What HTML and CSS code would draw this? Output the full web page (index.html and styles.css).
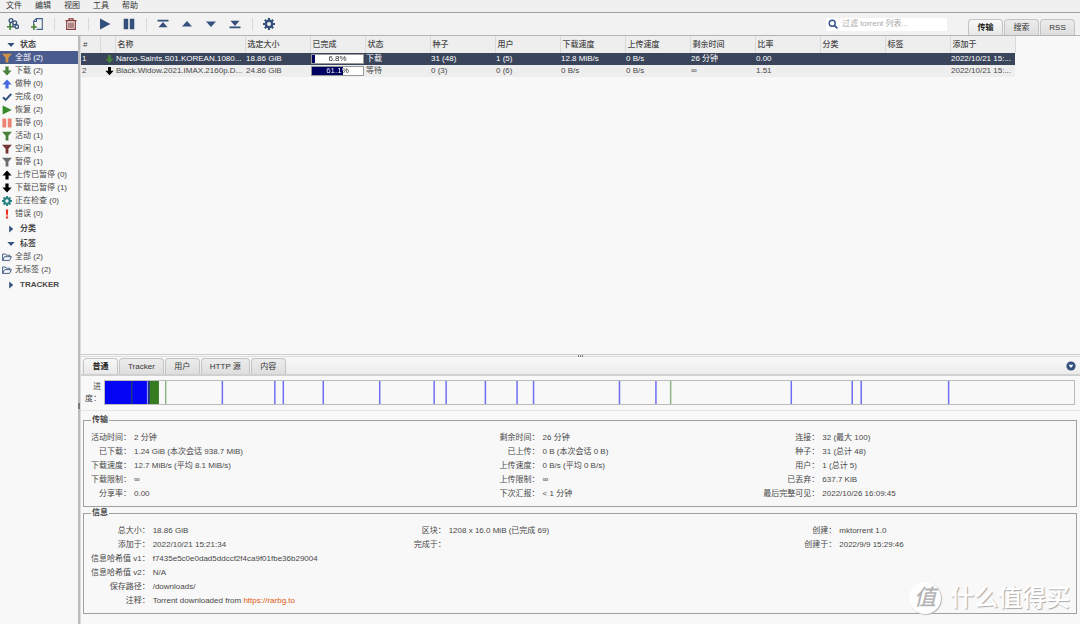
FILE: index.html
```html
<!DOCTYPE html>
<html lang="zh-CN">
<head>
<meta charset="utf-8">
<title>Torrent</title>
<link rel="stylesheet" href="styles.css">
</head>
<body>
<svg class="defs" aria-hidden="true">
  <symbol id="funnel" viewBox="0 0 10 10"><path d="M0 .7h10L6.400 4.800V9.500H3.600V4.800z" fill="currentColor"/></symbol>
  <symbol id="down" viewBox="0 0 10 10"><path d="M3.400.5h3.200v4.100h3L5 9.600.4 4.600h3z" fill="currentColor"/></symbol>
  <symbol id="up" viewBox="0 0 10 10"><path d="M3.400 9.500h3.200V5.400h3L5 .4.4 5.400h3z" fill="currentColor"/></symbol>
  <symbol id="check" viewBox="0 0 10 10"><path d="M1 5.200l2.700 2.700L9.200 2" fill="none" stroke="currentColor" stroke-width="2"/></symbol>
  <symbol id="play" viewBox="0 0 10 10"><path d="M.6.4L9.800 5 .6 9.600z" fill="currentColor"/></symbol>
  <symbol id="pause" viewBox="0 0 10 10"><path d="M.4.5h3.800v9H.4zM5.800.5h3.800v9H5.800z" fill="currentColor"/></symbol>
  <symbol id="gear" viewBox="0 0 12 12"><circle cx="6" cy="6" r="3.200" fill="none" stroke="currentColor" stroke-width="2.400"/><path d="M6 0v2.500M6 9.500V12M0 6h2.500M9.500 6H12M1.800 1.800l1.700 1.700M8.500 8.500l1.700 1.700M10.200 1.800L8.500 3.500M3.500 8.500L1.800 10.200" stroke="currentColor" stroke-width="2.200"/></symbol>
  <symbol id="bang" viewBox="0 0 10 10"><path d="M3.800.4h2.400l-.4 6H4.200zM3.900 7.500h2.200v2H3.900z" fill="currentColor"/></symbol>
  <symbol id="folder" viewBox="0 0 10 10"><path d="M.6 8.400V2h2.700l1 1.200h3.500v1.500M.6 8.400h6.900l2-3.700H2.500z" fill="none" stroke="currentColor" stroke-width=".9" stroke-linejoin="round"/></symbol>
  <symbol id="open" viewBox="0 0 8 8"><path d="M.4 2h7.200L4 6z" fill="currentColor"/></symbol>
  <symbol id="closed" viewBox="0 0 8 8"><path d="M2.200.4v7.200L6.200 4z" fill="currentColor"/></symbol>
</svg>

<nav class="menubar">
  <button>文件</button><button>编辑</button><button>视图</button><button>工具</button><button>帮助</button>
</nav>

<header class="toolbar">
  <div class="tools">
    <button aria-label="添加链接"><svg viewBox="0 0 12 12"><g fill="none" stroke="#34507c" stroke-width="1.300"><circle cx="4" cy="2.600" r="1.900"/><circle cx="7.700" cy="4.700" r="1.900"/><circle cx="9.800" cy="8.700" r="1.800"/><path d="M3.500 4.500L3 7M9.500 5.800l.4 1.200M6.200 6l-.5 2.600 2.500.2"/></g><path d="M0 8.700h6.200M3.100 5.700v6.200" stroke="#47803a" stroke-width="1.600"/></svg></button>
    <button aria-label="添加文件"><svg viewBox="0 0 12 12"><path d="M2.600 7V3.200L5.300.6h6v10.800H5.500M5.500.8v2.700H2.800" fill="none" stroke="#42618c" stroke-width="1.100"/><path d="M0 9h5.800M2.900 6v6" stroke="#47803a" stroke-width="1.600"/></svg></button>
    <span class="sep"></span>
    <button aria-label="删除"><svg viewBox="0 0 12 12"><path d="M.5 2.700h11M4 2.500V.8h4v1.700" fill="none" stroke="#873b3b" stroke-width="1.300"/><path d="M1.700 3v8.300h8.600V3M4 4.500V10M6 4.500V10M8 4.500V10" fill="none" stroke="#873b3b" stroke-width="1.200"/></svg></button>
    <span class="sep"></span>
    <button aria-label="开始"><svg viewBox="0 0 12 12"><path d="M1 .5L11.500 6 1 11.500z" fill="#34507c"/></svg></button>
    <button aria-label="暂停"><svg viewBox="0 0 12 12"><path d="M.7.8h4.500v10.400H.7zM6.800.8h4.500v10.400H6.800z" fill="#34507c"/></svg></button>
    <span class="sep"></span>
    <button aria-label="置顶"><svg viewBox="0 0 12 12"><path d="M.5 1.800h11v1.700H.5zM6 4l4.500 5.200h-9z" fill="#34507c"/></svg></button>
    <button aria-label="上移"><svg viewBox="0 0 12 12"><path d="M6 3l5 5.500H1z" fill="#34507c"/></svg></button>
    <button aria-label="下移"><svg viewBox="0 0 12 12"><path d="M6 9l5-5.500H1z" fill="#34507c"/></svg></button>
    <button aria-label="置底"><svg viewBox="0 0 12 12"><path d="M.5 8.500h11v1.700H.5zM6 8L1.500 2.800h9z" fill="#34507c"/></svg></button>
    <span class="sep"></span>
    <button aria-label="设置"><svg class="navy"><use href="#gear"/></svg></button>
  </div>
  <label class="search">
    <svg viewBox="0 0 10 10"><circle cx="4.200" cy="4.200" r="3" fill="none" stroke="#2f4f8c" stroke-width="1.400"/><path d="M6.400 6.400l3 3" stroke="#2f4f8c" stroke-width="1.600"/></svg>
    <input type="text" placeholder="过滤 torrent 列表..." aria-label="过滤 torrent 列表">
  </label>
  <div class="tabs main-tabs">
    <button class="tab active">传输</button><button class="tab">搜索</button><button class="tab">RSS</button>
  </div>
</header>

<main class="workspace">
  <aside class="sidebar">
    <button class="group"><svg><use href="#open"/></svg>状态</button>
    <button class="item selected"><svg class="orange"><use href="#funnel"/></svg>全部 (2)</button>
    <button class="item"><svg class="green"><use href="#down"/></svg>下载 (2)</button>
    <button class="item"><svg class="blue"><use href="#up"/></svg>做种 (0)</button>
    <button class="item"><svg class="navy"><use href="#check"/></svg>完成 (0)</button>
    <button class="item"><svg class="bright"><use href="#play"/></svg>恢复 (2)</button>
    <button class="item"><svg class="salmon"><use href="#pause"/></svg>暂停 (0)</button>
    <button class="item"><svg class="green"><use href="#funnel"/></svg>活动 (1)</button>
    <button class="item"><svg class="maroon"><use href="#funnel"/></svg>空闲 (1)</button>
    <button class="item"><svg class="gray"><use href="#funnel"/></svg>暂停 (1)</button>
    <button class="item"><svg class="black"><use href="#up"/></svg>上传已暂停 (0)</button>
    <button class="item"><svg class="black"><use href="#down"/></svg>下载已暂停 (1)</button>
    <button class="item"><svg class="teal"><use href="#gear"/></svg>正在检查 (0)</button>
    <button class="item"><svg class="red"><use href="#bang"/></svg>错误 (0)</button>
    <button class="group"><svg><use href="#closed"/></svg>分类</button>
    <button class="group"><svg><use href="#open"/></svg>标签</button>
    <button class="item"><svg class="navy"><use href="#folder"/></svg>全部 (2)</button>
    <button class="item"><svg class="navy"><use href="#folder"/></svg>无标签 (2)</button>
    <button class="group"><svg><use href="#closed"/></svg>TRACKER</button>
  </aside>
  <div class="vsplit"><i></i></div>
  <div class="content">
    <section class="list">
      <table>
        <colgroup><col class="c-num"><col class="c-icon"><col class="c-name"><col><col class="c-done"><col><col><col><col><col><col><col><col><col><col></colgroup>
        <thead><tr><th>#</th><th></th><th>名称</th><th>选定大小</th><th>已完成</th><th>状态</th><th>种子</th><th>用户</th><th>下载速度</th><th>上传速度</th><th>剩余时间</th><th>比率</th><th>分类</th><th>标签</th><th>添加于</th></tr></thead>
        <tbody>
          <tr class="current"><td>1</td><td><svg class="green"><use href="#down"/></svg></td><td>Narco-Saints.S01.KOREAN.1080...</td><td>18.86 GiB</td><td><div class="meter" style="--p:6.8%"><span>6.8%</span></div></td><td>下载</td><td>31 (48)</td><td>1 (5)</td><td>12.8 MiB/s</td><td>0 B/s</td><td>26 分钟</td><td>0.00</td><td></td><td></td><td>2022/10/21 15:...</td></tr>
          <tr><td>2</td><td><svg class="black"><use href="#down"/></svg></td><td>Black.Widow.2021.IMAX.2160p.D...</td><td>24.86 GiB</td><td><div class="meter" style="--p:61.1%"><span>61.1%</span></div></td><td>等待</td><td>0 (3)</td><td>0 (6)</td><td>0 B/s</td><td>0 B/s</td><td>∞</td><td>1.51</td><td></td><td></td><td>2022/10/21 15:...</td></tr>
        </tbody>
      </table>
    </section>
    <div class="hsplit"><i></i><i></i><i></i></div>
    <div class="detail-bar">
      <div class="tabs">
        <button class="tab active">普通</button><button class="tab">Tracker</button><button class="tab">用户</button><button class="tab">HTTP 源</button><button class="tab">内容</button>
      </div>
      <button class="collapse" aria-label="收起"><svg viewBox="0 0 10 10"><circle cx="5" cy="5" r="4.600" fill="#34507c"/><path d="M2.600 3.700h4.800L5 6.900z" fill="#fff"/></svg></button>
    </div>
    <section class="details">
      <div class="pieces">
        <span>进度：</span>
        <svg viewBox="0 0 970 24" preserveAspectRatio="none">
          <path d="M0 0h42v24H0z" fill="#0505f5"/>
          <path d="M26 0h1.500v24H26zM43 0h2v24h-2z" fill="#20387e"/>
          <path d="M42 0h1v24h-1z" fill="#8d8df8"/>
          <path d="M45 0h9v24h-9z" fill="#367b20"/>
          <path d="M60 0h1.500v24H60zM565.500 0h1.500v24h-1.500z" fill="#8fb582"/>
          <path d="M117.500 0v24M170 0v24M178.500 0v24M218.500 0v24M275 0v24M329.500 0v24M341.500 0v24M380.800 0v24M412.500 0v24M429 0v24M515 0v24M551.500 0v24M687 0v24M748 0v24M757 0v24M844.500 0v24" stroke="#6f6ff5" stroke-width="1.500"/>
        </svg>
      </div>
      <fieldset>
        <legend>传输</legend>
        <div class="facts transfer">
          <dl><dt>活动时间：</dt><dd>2 分钟</dd><dt>已下载：</dt><dd>1.24 GiB (本次会话 938.7 MiB)</dd><dt>下载速度：</dt><dd>12.7 MiB/s (平均 8.1 MiB/s)</dd><dt>下载限制：</dt><dd>∞</dd><dt>分享率：</dt><dd>0.00</dd></dl>
          <dl><dt>剩余时间：</dt><dd>26 分钟</dd><dt>已上传：</dt><dd>0 B (本次会话 0 B)</dd><dt>上传速度：</dt><dd>0 B/s (平均 0 B/s)</dd><dt>上传限制：</dt><dd>∞</dd><dt>下次汇报：</dt><dd>&lt; 1 分钟</dd></dl>
          <dl><dt>连接：</dt><dd>32 (最大 100)</dd><dt>种子：</dt><dd>31 (总计 48)</dd><dt>用户：</dt><dd>1 (总计 5)</dd><dt>已丢弃：</dt><dd>637.7 KiB</dd><dt>最后完整可见：</dt><dd>2022/10/26 16:09:45</dd></dl>
        </div>
      </fieldset>
      <fieldset>
        <legend>信息</legend>
        <div class="facts info">
          <dl><dt>总大小：</dt><dd>18.86 GiB</dd><dt>添加于：</dt><dd>2022/10/21 15:21:34</dd><dt>信息哈希值 v1：</dt><dd>f7435e5c0e0dad5ddccf2f4ca9f01fbe36b29004</dd><dt>信息哈希值 v2：</dt><dd>N/A</dd><dt>保存路径：</dt><dd>/downloads/</dd><dt>注释：</dt><dd>Torrent downloaded from <a href="https://rarbg.to">https://rarbg.to</a></dd></dl>
          <dl><dt>区块：</dt><dd>1208 x 16.0 MiB (已完成 69)</dd><dt>完成于：</dt><dd></dd></dl>
          <dl><dt>创建：</dt><dd>mktorrent 1.0</dd><dt>创建于：</dt><dd>2022/9/9 15:29:46</dd></dl>
        </div>
      </fieldset>
    </section>
  </div>
</main>
<div class="watermark"><span class="seal">值</span><span>什么值得买</span></div>
</body>
</html>
```
FILE: styles.css
```css
* { box-sizing: border-box; }
body {
  margin: 0;
  height: 100vh;
  display: flex;
  flex-direction: column;
  overflow: hidden;
  background: #f8f8f8;
  color: #484848;
  font: 8px/12px "Liberation Sans", "Noto Sans CJK SC", sans-serif;
}
button, input { font: inherit; color: inherit; border: 0; background: none; padding: 0; margin: 0; }
svg { display: block; flex: none; width: 10px; height: 10px; }
.defs { position: absolute; width: 0; height: 0; }

.orange { color: #d29245; }
.green { color: #47803a; }
.bright { color: #388a2c; }
.blue { color: #4467e0; }
.navy { color: #34507c; }
.salmon { color: #ec8273; }
.maroon { color: #753434; }
.gray { color: #6c6c6c; }
.black { color: #000; }
.teal { color: #27807f; }
.red { color: #ef2b22; }

.menubar {
  display: flex;
  gap: 13px;
  height: 13px;
  padding-left: 6px;
  background: #f0f0f0;
  border-bottom: 1px solid #a0a0a0;
  color: #333;
}

.toolbar {
  display: flex;
  align-items: center;
  height: 23px;
  padding: 0 5px 0 7px;
  background: #f2f2f2;
  border-bottom: 1px solid #b4b4b4;
}
.tools { display: flex; align-items: center; gap: 12px; flex: 1; }
.tools svg { width: 12px; height: 12px; }
.sep { width: 1px; height: 13px; margin: 0 -2px 0 -1px; background: #d8d8d8; }
.search {
  display: flex;
  align-items: center;
  gap: 4px;
  width: 121px;
  height: 13px;
  margin-right: 21px;
  padding-left: 2px;
  background: #fff;
}
.search input { flex: 1; min-width: 0; outline: 0; }
.search input::placeholder { color: #aaa; }

.tabs { display: flex; gap: 1px; align-self: flex-end; }
.tab {
  min-width: 35px;
  height: 16px;
  padding: 1px 8px 0;
  border: 1px solid #c4c4c4;
  border-bottom: 0;
  border-radius: 4px 4px 0 0;
  background: linear-gradient(#ececec, #dedede);
  color: #333;
}
.tab.active { background: linear-gradient(#f8f8f8, #e8e8e8); color: #222; font-weight: 700; }

.workspace { display: flex; flex: 1; min-height: 0; }
.sidebar { width: 78px; display: flex; flex-direction: column; }
.group, .item { display: flex; align-items: center; text-align: left; white-space: nowrap; }
.group { height: 15px; padding: 2px 0 0 7px; gap: 5px; font-weight: 700; }
.group svg { width: 8px; height: 8px; color: #34507c; }
.item { height: 13px; padding-left: 2px; gap: 3px; }
.item.selected { background: #4a5b8e; color: #fff; }
.vsplit { display: flex; flex-direction: column; justify-content: flex-end; width: 3px; padding-bottom: 215px; background: #bdbdbd; border-right: 1px solid #dcdcdc; }
.vsplit i { height: 6px; width: 2px; background: #777; }

.content { flex: 1; min-width: 0; display: flex; flex-direction: column; }
.list { flex: 1; min-height: 0; overflow: hidden; }
table { width: 934px; table-layout: fixed; border-collapse: collapse; }
col { width: 65px; }
.c-num { width: 19px; }
.c-icon { width: 15px; }
.c-name { width: 130px; }
.c-done { width: 55px; }
th {
  height: 17px;
  padding: 0 2px;
  background: #eee;
  border-right: 1px solid #dadada;
  text-align: left;
  font-weight: 500;
}
td { height: 12px; padding: 0 0 0 1px; line-height: 12px; white-space: nowrap; overflow: hidden; }
td svg { margin-left: 4px; width: 9px; }
tbody tr { background: #eee; }
tbody .current { background: #3a445a; color: #fff; }
.meter {
  width: 53px;
  height: 10px;
  border: 1px solid #999;
  background: linear-gradient(to right, #000060 var(--p), #fff var(--p));
  text-align: center;
  line-height: 8px;
}
.meter span {
  display: block;
  background: linear-gradient(to right, #fff var(--p), #222 var(--p));
  background-clip: text;
  color: transparent;
}

.hsplit { display: flex; justify-content: center; align-items: center; gap: 1px; height: 3px; border-top: 1px solid #ccc; border-bottom: 1px solid #ddd; }
.hsplit i { width: 1px; height: 2px; background: #777; }
.detail-bar {
  display: flex;
  justify-content: space-between;
  align-items: center;
  height: 19px;
  padding: 0 4px 0 2px;
  background: linear-gradient(#f8f8f8, #ececec);
  border-bottom: 2px solid #d0d0d0;
}

.details { padding-bottom: 10px; }
.pieces {
  display: flex;
  align-items: center;
  gap: 3px;
  margin-bottom: 3px;
  padding: 4px 5px 5px 4px;
  border-bottom: 1px solid #e6e6e6;
}
.pieces span { width: 16px; text-align: right; }
.pieces svg { flex: 1; width: auto; height: 25px; border: 1px solid #bcbcbc; }
fieldset { margin: 0 3px 0 2px; padding: 5px 7px; border: 1px solid #a0a0a0; min-width: 0; }
legend { margin: 0; padding: 0 1px; font-weight: 700; line-height: 12px; }
.facts { display: grid; }
.transfer { grid-template-columns: 409fr 264fr 306fr; }
.info { grid-template-columns: 323fr 391fr 265fr; }
dl { display: grid; grid-template-columns: max-content 1fr; grid-auto-rows: 14px; column-gap: 3px; margin: 0; line-height: 14px; align-content: start; }
dt { text-align: right; }
dd { margin: 0; white-space: nowrap; }
a { color: #e0580f; text-decoration: none; }

.watermark {
  position: absolute;
  right: 10px;
  bottom: 10px;
  display: flex;
  align-items: center;
  gap: 9px;
  color: #fff;
  font-size: 24px;
  font-weight: 500;
  line-height: 32px;
  text-shadow: 1px 1px 1px #aaa;
}
.seal {
  width: 32px;
  height: 32px;
  border-radius: 50%;
  background: #fff;
  box-shadow: 1px 1px 1px #bbb;
  color: #b4b4b4;
  font-size: 22px;
  text-align: center;
  text-shadow: none;
  font-style: italic;
}
```
